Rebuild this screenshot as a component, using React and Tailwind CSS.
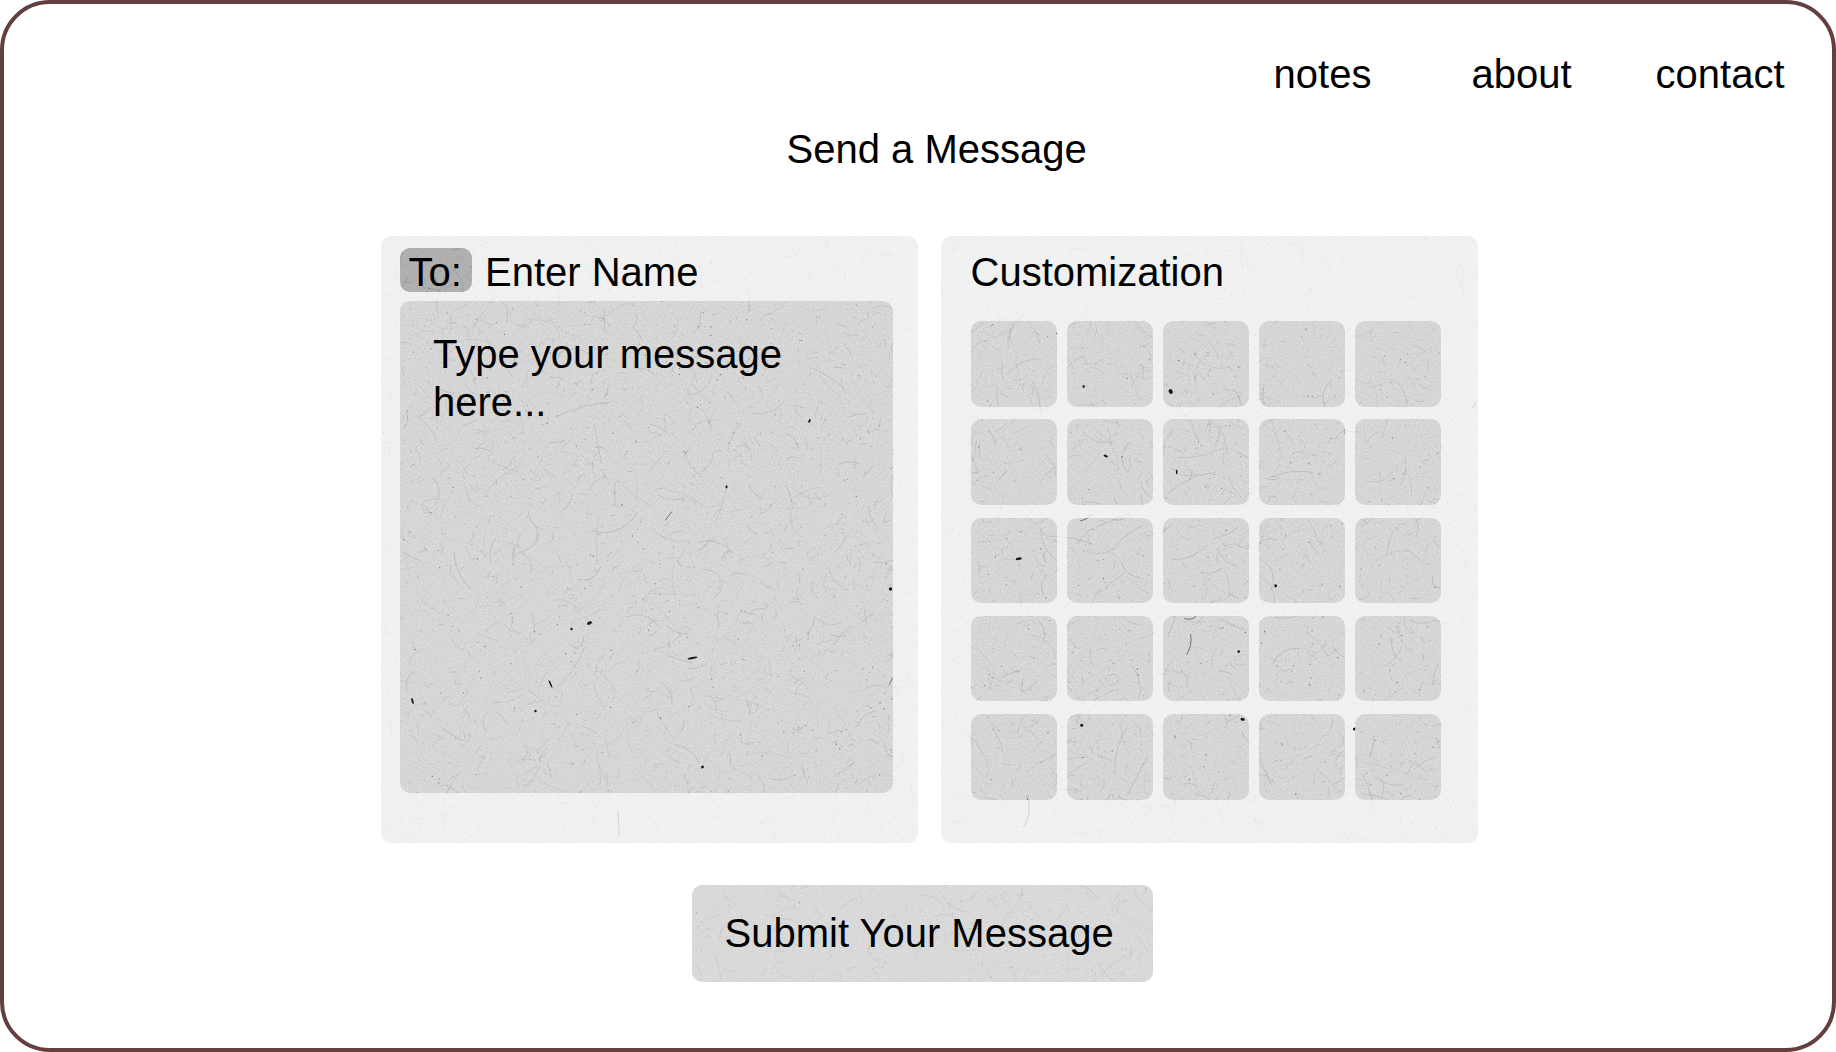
import React from 'react';

// seeded random so the paper texture is the same on every load
const rng = (seed) => () => {
  seed = (seed + 0x6d2b79f5) | 0;
  let t = Math.imul(seed ^ (seed >>> 15), 1 | seed);
  t = (t + Math.imul(t ^ (t >>> 7), 61 | t)) ^ t;
  return ((t ^ (t >>> 14)) >>> 0) / 4294967296;
};

const r = rng(4711);
const fibres = Array.from({ length: 4200 }, () => {
  const x = 380 + r() * 1100;
  const y = 236 + r() * 750;
  const a = r() * Math.PI * 2;
  const len = 3 + r() * r() * r() * 60;
  const bend = (r() - 0.5) * len * 0.8;
  const dx = Math.cos(a) * len;
  const dy = Math.sin(a) * len;
  return {
    x,
    y,
    d: `M${x.toFixed(1)} ${y.toFixed(1)}q${(dx / 2 - (dy / len) * bend).toFixed(1)} ${(dy / 2 + (dx / len) * bend).toFixed(1)} ${dx.toFixed(1)} ${dy.toFixed(1)}`,
    o: 0.08 + r() * 0.18,
  };
});
const dots = Array.from({ length: 2600 }, () => ({
  x: 380 + r() * 1100,
  y: 236 + r() * 750,
  s: 0.3 + r() * 0.4,
  o: 0.15 + r() * 0.45,
}));

// the darkest specks, in page coordinates
const specks = [
  [590, 623, 2.6, 1.5, -20], [572, 629, 1.2, 1.2, 0], [693, 658, 5, 1, -12], [891, 589, 1.7, 1.7, 0],
  [413, 701, 1, 3, -15], [536, 711, 1.2, 1.2, 0], [703, 767, 1.6, 1.2, -30], [551, 684, 0.8, 4, -25],
  [1171, 392, 2, 2.6, -25], [1106, 457, 2.2, 1.2, 25], [1019, 559, 3, 1.3, -10], [1082, 726, 1.5, 1.5, 0],
  [1354, 729, 1.6, 1.6, 0], [1243, 720, 2.2, 1.4, 10], [1239, 652, 1.3, 1.3, 0], [1276, 586, 1.3, 1.6, -20],
  [1084, 387, 1, 1.5, 0], [1177, 473, 0.8, 2.4, 0], [810, 421, 1, 2, 25], [727, 487, 1, 1.4, 0],
];
const strokes = [
  'M1472 408l3-6', 'M618 811q1 10 1 24', 'M672 512l-6 8', 'M893 678l-3 6', 'M1081 521q8-2 10-6',
  'M1185 619q7 2 11-2', 'M1187 655q6-10 4-20', 'M1023 827q8-12 5-28',
];

const Paper = ({ x, y, w, h, tone = 1 }) => {
  const inBox = (p) => p.x > x - 60 && p.x < x + w + 60 && p.y > y - 60 && p.y < y + h + 60;
  return (
    <svg
      className="absolute inset-0 w-full h-full pointer-events-none"
      viewBox={`${x} ${y} ${w} ${h}`}
      preserveAspectRatio="none"
    >
      <rect x={x} y={y} width={w} height={h} filter="url(#grain)" opacity={0.4 * tone} />
      <g fill="none" stroke="#222" strokeWidth="0.5" strokeLinecap="round" opacity={tone}>
        {fibres.filter(inBox).map((f, i) => (
          <path key={i} d={f.d} strokeOpacity={f.o} />
        ))}
        {strokes.map((d, i) => (
          <path key={i} d={d} strokeOpacity="0.7" strokeWidth="0.8" />
        ))}
      </g>
      <g fill="#222" opacity={tone}>
        {dots.filter(inBox).map((d, i) => (
          <circle key={i} cx={d.x} cy={d.y} r={d.s} fillOpacity={d.o} />
        ))}
      </g>
      <g fill="#161616">
        {specks.map(([sx, sy, rx, ry, rot], i) => (
          <ellipse key={i} cx={sx} cy={sy} rx={rx} ry={ry} transform={`rotate(${rot} ${sx} ${sy})`} />
        ))}
      </g>
    </svg>
  );
};

const cols = [971.3, 1067.3, 1163.3, 1259.3, 1355.3];
const rows = [321.5, 420, 518.2, 616.4, 714.7];

export default function App() {
  return (
    <div className="h-[1052px] w-[1836px] overflow-hidden bg-white font-['Liberation_Sans',Arial,sans-serif] text-[40px] leading-[46px] text-black">
      <svg className="absolute w-0 h-0">
        <filter id="grain" x="0" y="0" width="100%" height="100%">
          <feTurbulence type="fractalNoise" baseFrequency="0.55" numOctaves="2" seed="7" />
          <feColorMatrix values="0 0 0 0 0.3  0 0 0 0 0.3  0 0 0 0 0.3  1.1 0 0 0 -0.42" />
        </filter>
      </svg>

      <div className="relative h-full w-full rounded-[50px] border-[4.5px] border-[#633f3f]">
        <nav className="flex justify-end pt-[46.5px] pr-[47.5px]">
          <a className="mr-[100px]">notes</a>
          <a className="mr-[84px]">about</a>
          <a>contact</a>
        </nav>

        <h1 className="mt-[29px] ml-[782.5px] font-normal">Send a Message</h1>

        <div className="mt-[64px] ml-[376.5px] flex gap-[23px]">
          {/* message card */}
          <section className="relative h-[607px] w-[537px] overflow-hidden rounded-[10px] bg-[#f2f2f2] pt-[12px] pl-[19.5px]">
            <Paper x={381} y={236} w={537} h={607} tone={0.25} />
            <div className="relative flex h-[53px] items-start">
              <span className="relative h-[44.5px] w-[72px] overflow-hidden rounded-[10px] bg-[#b2b2b2]">
                <Paper x={400.5} y={248} w={72} h={44.5} tone={1.1} />
              </span>
              <span className="absolute top-[1px] left-[8.5px]">To:</span>
              <span className="mt-[1px] ml-[13px]">Enter Name</span>
            </div>
            <div className="relative h-[492px] w-[493px] overflow-hidden rounded-[10px] bg-[#dadada] px-[33px] pt-[29.5px] leading-[48px]">
              <Paper x={400.5} y={301} w={493} h={492} />
              <p className="relative">Type your message here...</p>
            </div>
          </section>

          {/* customization card */}
          <section className="relative h-[607px] w-[537px] overflow-hidden rounded-[10px] bg-[#f2f2f2] pt-[13px] pl-[30px]">
            <Paper x={940.5} y={236} w={537} h={607} tone={0.25} />
            <h2 className="relative font-normal">Customization</h2>
            <div className="relative mt-[26.5px] ml-[0.5px] grid grid-cols-[repeat(5,85.5px)] grid-rows-[repeat(5,85.5px)] gap-x-[10.5px] gap-y-[12.8px]">
              {rows.map((y) =>
                cols.map((x) => (
                  <button key={`${x}-${y}`} className="relative overflow-hidden rounded-[10px] bg-[#dadada]">
                    <Paper x={x} y={y} w={85.5} h={85.5} />
                  </button>
                )),
              )}
            </div>
          </section>
        </div>

        <button className="relative mt-[42.5px] ml-[687.5px] block h-[96.5px] w-[461px] overflow-hidden rounded-[10px] bg-[#dcdcdc] pl-[33px] text-left">
          <Paper x={692} y={885.5} w={461} h={96.5} tone={0.6} />
          <span className="relative">Submit Your Message</span>
        </button>
      </div>
    </div>
  );
}
